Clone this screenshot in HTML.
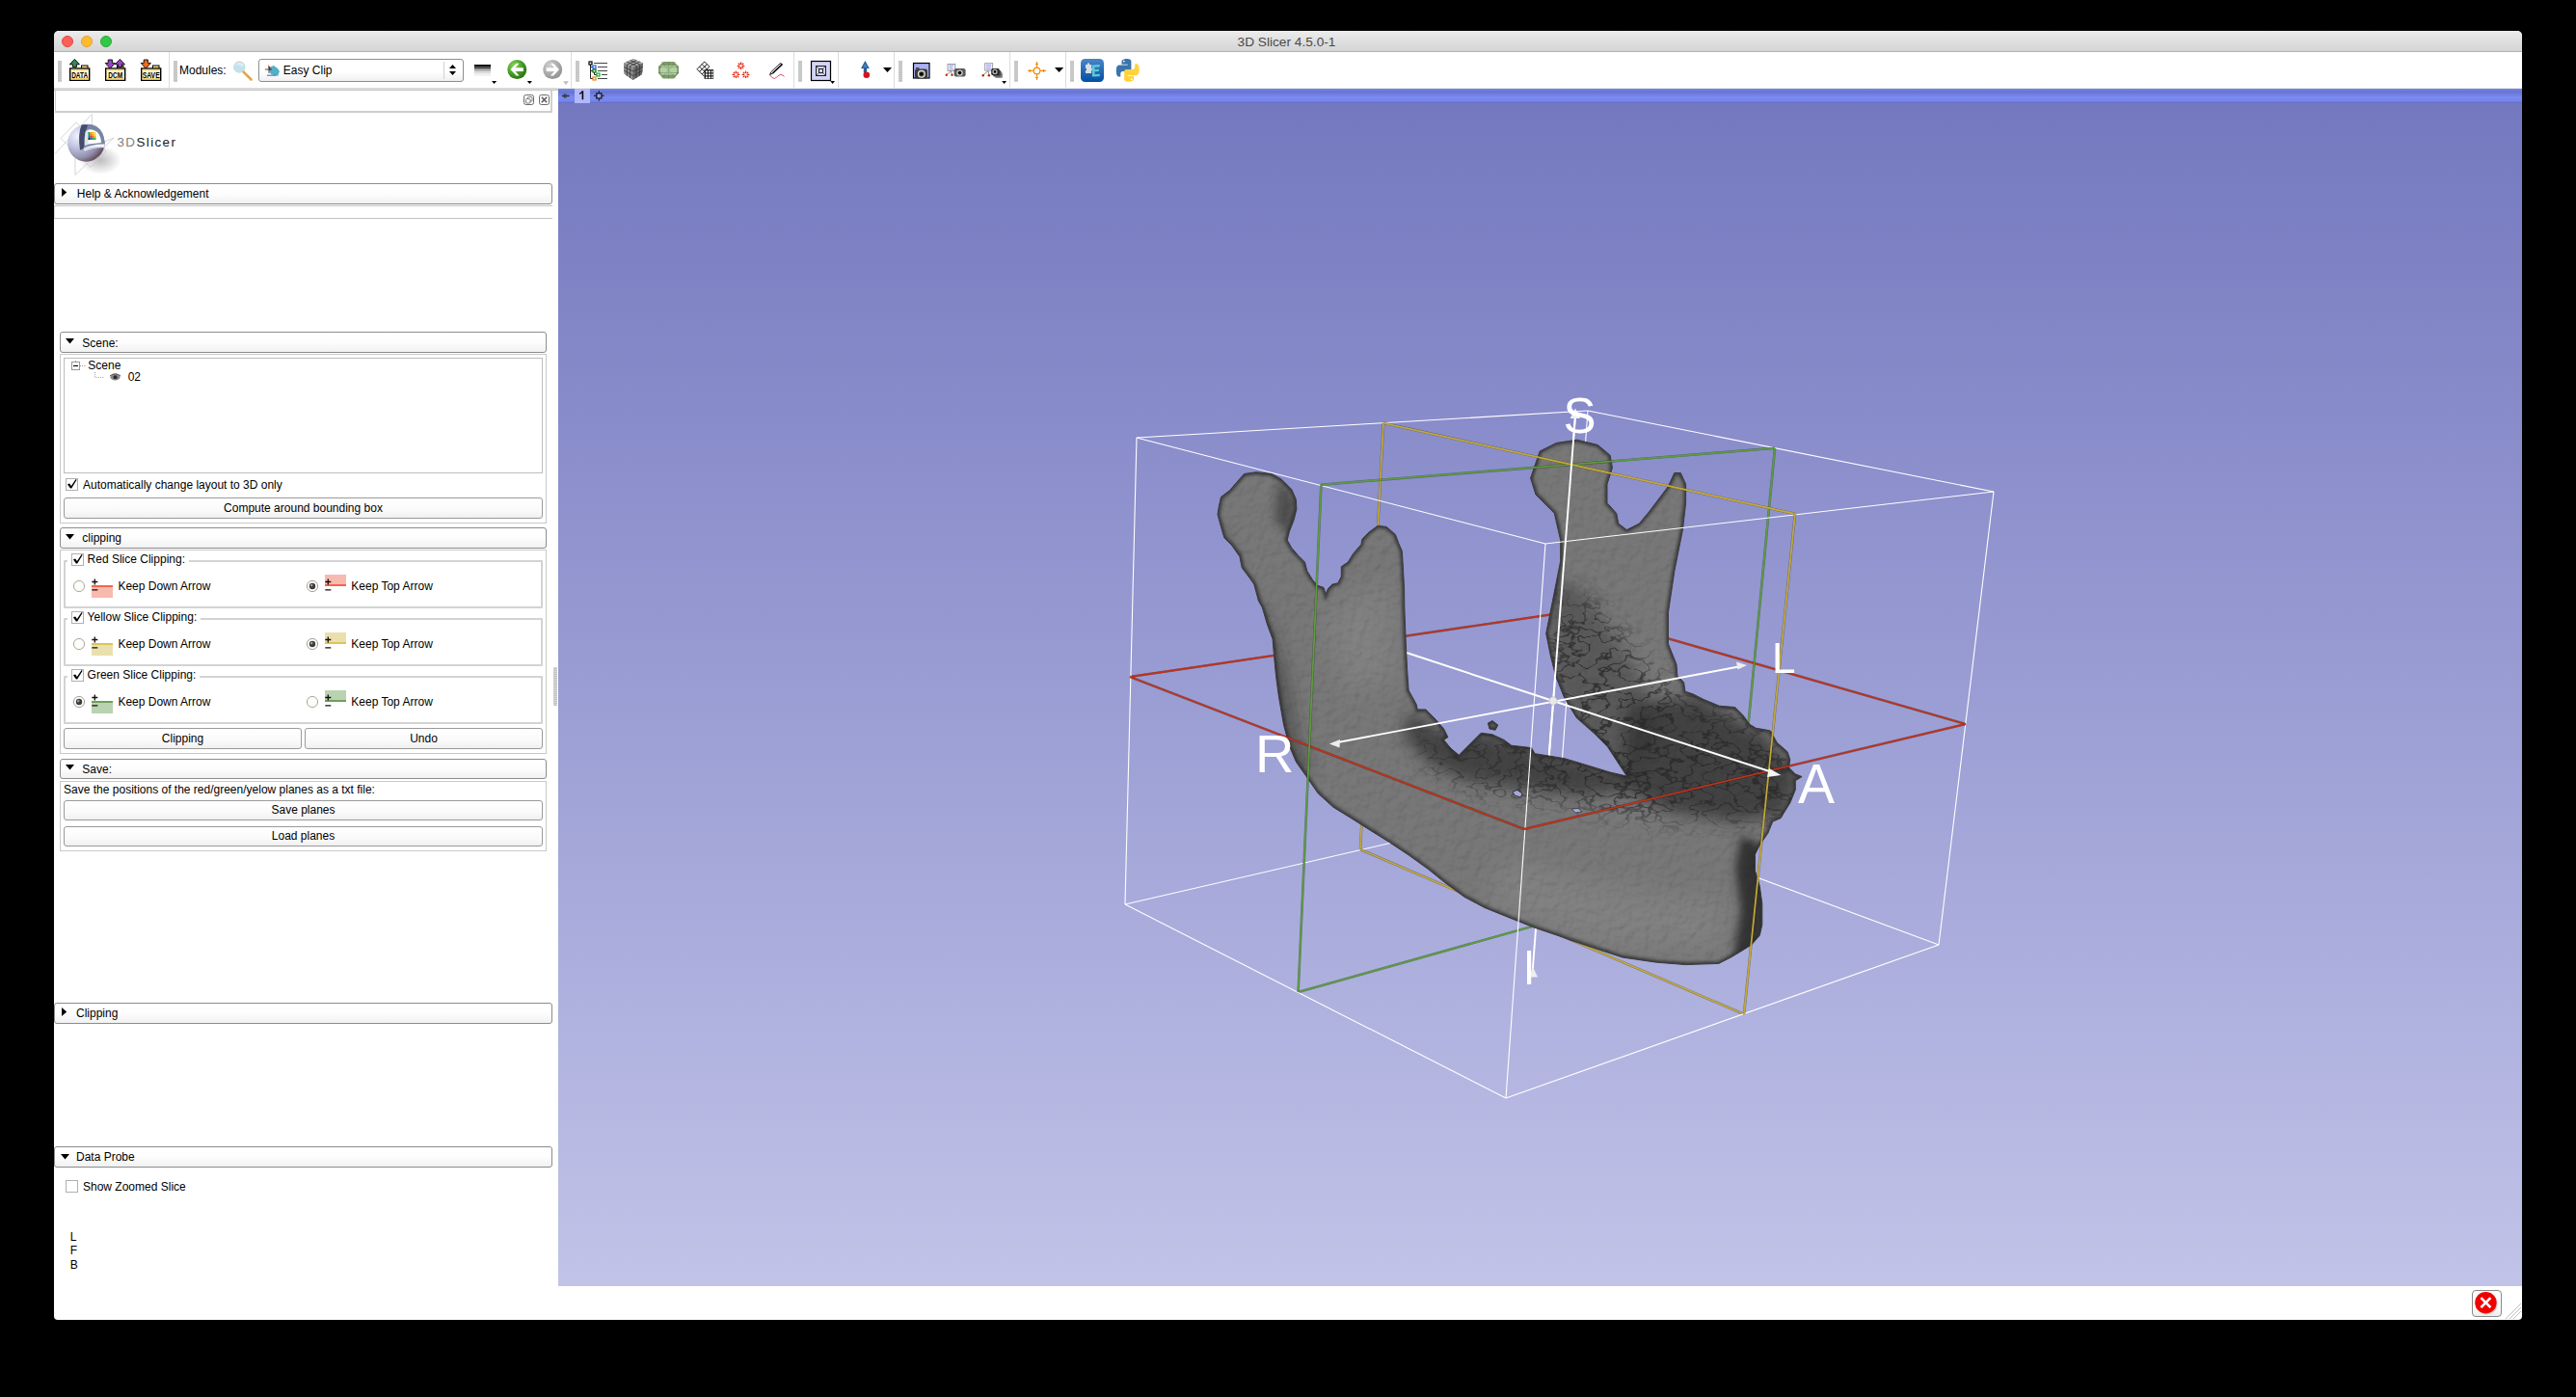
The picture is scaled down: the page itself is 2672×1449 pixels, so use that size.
<!DOCTYPE html>
<html><head><meta charset="utf-8">
<style>
*{box-sizing:border-box;margin:0;padding:0}
html,body{width:2672px;height:1449px;background:#000;overflow:hidden;font-family:"Liberation Sans",sans-serif;color:#000}
.a{position:absolute}
#win{position:absolute;left:56px;top:32px;width:2560px;height:1337px;background:#fff;border-radius:5px 5px 4px 4px;overflow:hidden}
#title{position:absolute;left:0;top:0;width:2560px;height:22px;background:linear-gradient(#ececec,#d4d4d4);border-bottom:1px solid #b2b2b2}
#title .t{position:absolute;left:-1.5px;width:2560px;top:4px;text-align:center;font-size:13.7px;color:#4a4a4a;line-height:16px}
.tl{position:absolute;top:5px;width:12px;height:12px;border-radius:50%}
.txt{position:absolute;white-space:pre;font-size:12px;line-height:14px}
.cb{position:absolute;border:1px solid #8c8c8c;border-radius:3px;background:linear-gradient(#fff 0%,#fdfdfd 50%,#f1f1f1 100%)}
.btn{position:absolute;border:1px solid #9a9a9a;border-radius:3px;background:linear-gradient(#fff 0%,#fafafa 60%,#f0f0f0 100%);font-size:12px;text-align:center;line-height:19px}
.frame{position:absolute;border:1px solid #c9c9c9}
.chk{position:absolute;width:13px;height:13px;border:1px solid #b0b0b0;background:#fff}
</style></head>
<body>
<div id="win">
  <div id="title">
    <div class="tl" style="left:8px;background:#fc5f57;border:1px solid #df4744"></div>
    <div class="tl" style="left:28px;background:#fdbc2e;border:1px solid #dea236"></div>
    <div class="tl" style="left:48px;background:#33c748;border:1px solid #27aa35"></div>
    <div class="t">3D Slicer 4.5.0-1</div>
  </div>
</div>
<div class="a" style="left:56px;top:91px;width:523px;height:3px;background:linear-gradient(#dadada 0,#dadada 66%,#c8c8c8 66%)"></div>
<div class="a" style="left:579px;top:91px;width:2037px;height:1px;background:#ecece6"></div>
<div class="txt" style="left:186px;top:65.9px">Modules:</div>
<div class="a" style="left:268px;top:61px;width:213px;height:24px;border:1px solid #8e8e8e;border-radius:3px;background:linear-gradient(#fff 0%,#fff 55%,#f0f0f0 100%)"></div>
<div class="txt" style="left:293.8px;top:65.9px">Easy Clip</div>
<svg class="a" style="left:0;top:0" width="1200" height="100" viewBox="0 0 1200 100">
<defs>
<pattern id="hdl" width="4" height="2" patternUnits="userSpaceOnUse"><rect width="4" height="2" fill="#cfcfcf"/><rect y="1" width="4" height="1" fill="#c2c2c2"/></pattern>
<radialGradient id="grnb" cx="0.35" cy="0.3" r="0.75"><stop offset="0" stop-color="#8fd45a"/><stop offset="0.6" stop-color="#3f9a22"/><stop offset="1" stop-color="#2a7010"/></radialGradient>
<radialGradient id="gryb" cx="0.35" cy="0.3" r="0.75"><stop offset="0" stop-color="#d0d0d0"/><stop offset="1" stop-color="#8f8f8f"/></radialGradient>
<linearGradient id="extg" x1="0" y1="0" x2="0" y2="1"><stop offset="0" stop-color="#4a86c8"/><stop offset="1" stop-color="#0050a2"/></linearGradient>
<linearGradient id="wlg" x1="0" y1="0" x2="0" y2="1"><stop offset="0" stop-color="#000"/><stop offset="0.2" stop-color="#222"/><stop offset="0.45" stop-color="#888"/><stop offset="0.7" stop-color="#c8c8c8"/><stop offset="1" stop-color="#f4f4f4"/></linearGradient>
<linearGradient id="cubeg" x1="0" y1="0" x2="0" y2="1"><stop offset="0" stop-color="#bdbdbd"/><stop offset="1" stop-color="#4a4a4a"/></linearGradient>
</defs>
<!-- handles -->
<rect x="60" y="63" width="4" height="22" fill="url(#hdl)"/>
<rect x="180" y="63" width="4" height="22" fill="url(#hdl)"/>
<rect x="597" y="63" width="4" height="22" fill="url(#hdl)"/>
<rect x="828" y="63" width="4" height="22" fill="url(#hdl)"/>
<rect x="932" y="63" width="4" height="22" fill="url(#hdl)"/>
<rect x="1052" y="63" width="4" height="22" fill="url(#hdl)"/>
<rect x="1110" y="63" width="4" height="22" fill="url(#hdl)"/>
<!-- separators -->
<g fill="#dcdcdc"><rect x="175" y="54" width="1" height="37"/><rect x="592" y="54" width="1" height="37"/><rect x="869" y="54" width="1" height="37"/><rect x="927" y="54" width="1" height="37"/><rect x="1047" y="54" width="1" height="37"/><rect x="1105" y="54" width="1" height="37"/><rect x="823" y="54" width="1" height="37"/></g>
<!-- DATA -->
<g transform="translate(72,61)">
 <rect x="12.5" y="7" width="6.5" height="4" fill="#f7df8a" stroke="#000" stroke-width="1"/>
 <rect x="0.7" y="10" width="20" height="12.3" fill="#fff8dc" stroke="#000" stroke-width="1.4"/>
 <rect x="1.5" y="20" width="18.5" height="1.6" fill="#f2d36a"/><rect x="1.5" y="10.8" width="18.5" height="1.4" fill="#f2d36a"/>
 <text x="10.7" y="20" font-size="9.5" font-weight="bold" text-anchor="middle" font-family="Liberation Sans" textLength="17" lengthAdjust="spacingAndGlyphs">DATA</text>
 <path d="M0.4 5.8 L5.4 0.4 L10.4 5.8 L7.4 5.8 L7.4 8.6 L3.4 8.6 L3.4 5.8 Z" fill="#2f8a55" stroke="#000" stroke-width="0.9"/>
</g>
<!-- DCM -->
<g transform="translate(109,61)">
 <rect x="12.5" y="7" width="6.5" height="4" fill="#f7df8a" stroke="#000" stroke-width="1"/>
 <rect x="0.7" y="10" width="20" height="12.3" fill="#fff8dc" stroke="#000" stroke-width="1.4"/>
 <rect x="1.5" y="20" width="18.5" height="1.6" fill="#f2d36a"/><rect x="1.5" y="10.8" width="18.5" height="1.4" fill="#f2d36a"/>
 <text x="10.7" y="20" font-size="9.5" font-weight="bold" text-anchor="middle" font-family="Liberation Sans" textLength="15" lengthAdjust="spacingAndGlyphs">DCM</text>
 <path d="M0.2 4.4 L3.2 4.4 L3.2 1 L7.4 1 L7.4 4.4 L10.4 4.4 L5.3 10 Z" fill="#9a45c8" stroke="#000" stroke-width="0.9"/>
 <path d="M10.4 5.8 L15.4 0.4 L20.4 5.8 L17.4 5.8 L17.4 8.6 L13.4 8.6 L13.4 5.8 Z" fill="#9a45c8" stroke="#000" stroke-width="0.9"/>
</g>
<!-- SAVE -->
<g transform="translate(146,61)">
 <rect x="12.5" y="7" width="6.5" height="4" fill="#f7df8a" stroke="#000" stroke-width="1"/>
 <rect x="0.7" y="10" width="20" height="12.3" fill="#fff8dc" stroke="#000" stroke-width="1.4"/>
 <rect x="1.5" y="20" width="18.5" height="1.6" fill="#f2d36a"/><rect x="1.5" y="10.8" width="18.5" height="1.4" fill="#f2d36a"/>
 <text x="10.7" y="20" font-size="9.5" font-weight="bold" text-anchor="middle" font-family="Liberation Sans" textLength="18" lengthAdjust="spacingAndGlyphs">SAVE</text>
 <path d="M0.2 4.4 L3.2 4.4 L3.2 1 L7.4 1 L7.4 4.4 L10.4 4.4 L5.3 10 Z" fill="#f06a1e" stroke="#000" stroke-width="0.9"/>
</g>
<!-- magnifier -->
<g>
 <line x1="252.5" y1="74.5" x2="260.5" y2="82.5" stroke="#e2a640" stroke-width="2.6" stroke-linecap="round"/>
 <circle cx="248.3" cy="69.5" r="5.6" fill="#d6eef5" stroke="#c9c9c9" stroke-width="1"/>
 <path d="M243.5 68.5 Q246 66 248.5 68 Q251 70 253.5 67.5 L253.5 70 Q251 75 248 75 Q244 74.5 243.5 70Z" fill="#bfe3ee"/>
</g>
<!-- combo icon -->
<g transform="translate(275,67)">
 <path d="M4 3 L9 1 L13 4 L15 7 L13 12 L6 10 L4 6Z" fill="#4fb0c8"/>
 <path d="M3 0 L6 4 L4 5 Z" fill="#d02020"/>
 <path d="M0 5 L7 5 M4 2 L4 9" stroke="#222" stroke-width="0.8"/>
 <rect x="2" y="10.5" width="9" height="1.5" fill="#5a6aa0" opacity="0.7"/>
</g>
<!-- combo arrows -->
<path d="M466 70.9 L469.5 66.9 L473 70.9Z M466 74 L469.5 78 L473 74Z" fill="#000"/>
<rect x="460" y="64" width="1" height="18" fill="#d0d0d0"/>
<!-- window level gradient icon -->
<rect x="492" y="67" width="17" height="2.4" fill="#0a0a0a"/><rect x="492" y="69.4" width="17" height="1.8" fill="#3a3a3a"/><rect x="492" y="71.2" width="17" height="1.6" fill="#8a8a8a"/><rect x="492" y="72.8" width="17" height="1.8" fill="#bdbdbd"/><rect x="492" y="74.6" width="17" height="1.9" fill="#dcdcdc"/><rect x="492" y="76.5" width="17" height="2.2" fill="#efefef"/>
<path d="M510 84 L515.2 84 L512.6 87Z" fill="#000"/>
<!-- green back arrow -->
<circle cx="536.3" cy="72.1" r="10" fill="url(#grnb)"/>
<path d="M529.5 72.1 L535.5 65.8 L538.6 65.8 L534.5 70.2 L542.8 70.2 L542.8 74 L534.5 74 L538.6 78.4 L535.5 78.4Z" fill="#fff"/>
<path d="M546.8 84 L552 84 L549.4 87Z" fill="#000"/>
<!-- gray forward arrow -->
<circle cx="573.2" cy="72.1" r="10" fill="url(#gryb)"/>
<path d="M580 72.1 L574 65.8 L570.9 65.8 L575 70.2 L566.7 70.2 L566.7 74 L575 74 L570.9 78.4 L574 78.4Z" fill="#fff"/>
<path d="M584 84.3 L590 84.3 L587 88Z" fill="#bdbdbd"/>
<!-- tree icon -->
<g transform="translate(611,64)" stroke-width="1">
 <path d="M1.5 3 L1.5 17.5 L5 17.5 M1.5 5.5 L5 5.5 M1.5 9.5 L5 9.5 M5.5 11 L5.5 13.5 L9 13.5" stroke="#222" fill="none"/>
 <path d="M5 1.5 L19 1.5 M9 5.5 L19 5.5 M9 9.5 L19 9.5 M13 13.5 L19 13.5 M9 17.5 L19 17.5" stroke="#444" stroke-width="1.2"/>
 <rect x="0" y="0" width="3" height="3" fill="#fff" stroke="#000" stroke-width="1.2"/>
 <rect x="4" y="4" width="3" height="3" fill="#fff" stroke="#1a6cf0" stroke-width="1.2"/>
 <rect x="4" y="8" width="3" height="3" fill="#fff" stroke="#0a6a10" stroke-width="1.2"/>
 <rect x="8" y="12" width="3" height="3" fill="#fff" stroke="#10b020" stroke-width="1.2"/>
 <rect x="4" y="16" width="3" height="3" fill="#fff" stroke="#f08010" stroke-width="1.2"/>
</g>
<!-- cube -->
<g transform="translate(647,61)">
 <path d="M10 0 L20 4.5 L19 16 L9.5 22 L0.5 15.5 L0 4.5Z" fill="#7a7a7a"/>
 <path d="M10 0 L20 4.5 L10 9 L0 4.5Z" fill="#a8a8a8"/>
 <path d="M0 4.5 L10 9 L9.5 22 L0.5 15.5Z" fill="#8e8e8e"/>
 <path d="M10 9 L20 4.5 L19 16 L9.5 22Z" fill="#6a6a6a"/>
 <path d="M3.3 6 L13.3 1.5 M6.7 7.5 L16.7 3 M3.3 3 L13.3 7.5 M6.7 1.5 L16.7 6 M3.3 6 L3.3 17.8 M6.7 7.5 L6.5 20 M0.2 8.5 L10 13 L19.7 8.5 M0.3 12 L9.8 17.5 L19.4 12.3 M13.3 7.5 L13 19.8 M16.7 6 L16.3 17.8" stroke="#333" stroke-width="0.8" fill="none"/>
</g>
<!-- green octagon -->
<g transform="translate(683,64)">
 <path d="M5 0 L16 0 L21 5 L21 12 L16 17.5 L5 17.5 L0 12 L0 5Z" fill="#7c9a6a"/>
 <path d="M3 4 L18 4 L19.5 9 L18 13.5 L3 13.5 L1.5 9Z" fill="#b4cfa4"/>
 <path d="M0 5.5 L21 5.5 M0 11.5 L21 11.5 M10.5 0 L10.5 17.5 M3 0 L18 17.5 M18 0 L3 17.5" stroke="#4a6a3a" stroke-width="0.7" opacity="0.45"/>
</g>
<!-- grid icon -->
<g transform="translate(723,64)">
 <g stroke="#000" stroke-width="0.9" fill="none">
  <path d="M0 7.7 L7.7 0 L13 5.3 M2.6 10.3 L10.3 2.6 M5.2 12.9 L12.9 5.2 M0 7.7 L7.7 15.4 M2.6 5.1 L8 10.5 M5.1 2.6 L10.5 8"/>
 </g>
 <rect x="7.6" y="8.2" width="9.5" height="9.6" fill="#000"/>
 <g fill="#fff"><rect x="8.8" y="9.4" width="2" height="2"/><rect x="11.8" y="9.4" width="2" height="2"/><rect x="14.8" y="9.4" width="1.8" height="2"/><rect x="8.8" y="12.4" width="2" height="2"/><rect x="11.8" y="12.4" width="2" height="2"/><rect x="14.8" y="12.4" width="1.8" height="2"/><rect x="8.8" y="15.4" width="2" height="1.8"/><rect x="11.8" y="15.4" width="2" height="1.8"/><rect x="14.8" y="15.4" width="1.8" height="1.8"/></g>
</g>
<!-- asterisks -->
<g stroke="#e8200a" stroke-width="1.3" stroke-linecap="round">
 <path d="M768.5 65 L768.5 66.5 M768.5 70 L768.5 71.5 M765.2 68.3 L766.7 68.3 M770.3 68.3 L771.8 68.3 M766.2 66 L767 66.8 M770 69.8 L770.8 70.6 M770.8 66 L770 66.8 M767 69.8 L766.2 70.6"/>
 <path d="M763.4 74.1 L763.4 75.6 M763.4 79.1 L763.4 80.6 M760.1 77.4 L761.6 77.4 M765.2 77.4 L766.7 77.4 M761.1 75.1 L761.9 75.9 M764.9 78.9 L765.7 79.7 M765.7 75.1 L764.9 75.9 M761.9 78.9 L761.1 79.7"/>
 <path d="M773.5 74.1 L773.5 75.6 M773.5 79.1 L773.5 80.6 M770.2 77.4 L771.7 77.4 M775.3 77.4 L776.8 77.4 M771.2 75.1 L772 75.9 M775 78.9 L775.8 79.7 M775.8 75.1 L775 75.9 M772 78.9 L771.2 79.7"/>
</g>
<!-- pencil -->
<g>
 <path d="M798.5 77.5 L800 74.5 L809.5 65.5 L811 67 L801.5 76Z" fill="#fff" stroke="#000" stroke-width="0.9"/>
 <path d="M801.5 76 L811 67 L810 66" stroke="#000" stroke-width="1.6" fill="none"/>
 <path d="M798.8 78 Q801 81.5 803.5 81.5 Q806 80 808 78 Q810 77 812 78 L813.5 79.5" stroke="#e03a60" stroke-width="0.9" fill="none"/>
</g>
<!-- layout button -->
<rect x="841.5" y="63.5" width="20" height="20" fill="#d4d4f6" stroke="#000" stroke-width="1.2"/>
<rect x="846.5" y="68.5" width="10" height="10" fill="none" stroke="#222" stroke-width="1"/>
<rect x="849.5" y="71.5" width="4" height="4" fill="none" stroke="#222" stroke-width="1"/>
<path d="M847 69 L849.5 71.5 M856 69 L853.5 71.5 M847 78 L849.5 75.5 M856 78 L853.5 75.5" stroke="#333" stroke-width="0.7"/>
<path d="M861.3 84 L866 84 L863.6 87Z" fill="#000"/>
<!-- blue arrow w red ball -->
<path d="M897.4 63 L901.8 71 L899 71 L899 75.5 L895.8 75.5 L895.8 71 L893 71Z" fill="#245f98"/>
<path d="M897.4 65.5 L900 70 L894.8 70Z" fill="#5a8cc8" opacity="0.7"/>
<circle cx="898.8" cy="77.7" r="3.3" fill="#d8101a"/>
<path d="M916 70 L925 70 L920.5 75Z" fill="#000"/>
<!-- camera 1 -->
<rect x="947.5" y="65.5" width="16.5" height="15.5" fill="#a9b1ef" stroke="#000" stroke-width="1.2"/>
<rect x="950" y="70" width="3.5" height="1.6" fill="#444"/>
<rect x="949" y="71.5" width="13" height="10" rx="2" fill="#3a3a3a"/>
<circle cx="955.8" cy="76.8" r="4" fill="#e8e8e8"/><circle cx="955.8" cy="76.8" r="2.8" fill="#555"/><circle cx="955.8" cy="76.8" r="1.8" fill="#000"/>
<!-- camera 2 -->
<rect x="983" y="66.5" width="7.8" height="7" fill="#f2f2ff" stroke="#8a8a8a" stroke-width="0.8"/>
<path d="M984.5 68 L989 68 M984.5 70 L988 70 M984.5 72 L989 72" stroke="#6060e0" stroke-width="0.6"/>
<path d="M986.5 74 L982 77.5 M986.5 74 L987.5 77.5" stroke="#666" stroke-width="0.7"/>
<circle cx="981.8" cy="77.8" r="1.2" fill="#c03000"/><circle cx="987.5" cy="77.8" r="1.2" fill="#c03000"/>
<rect x="989.6" y="71.1" width="12" height="8.5" rx="2" fill="#5a5a5a"/>
<circle cx="995.5" cy="75.6" r="3.2" fill="#c8c8c8"/><circle cx="995.5" cy="75.6" r="1.8" fill="#000"/>
<!-- camera 3 -->
<rect x="1021.7" y="65.7" width="8" height="7.5" fill="#f2f2ff" stroke="#8a8a8a" stroke-width="0.8"/>
<path d="M1023 67.5 L1028 67.5 M1023 69.5 L1028 69.5 M1023 71.5 L1028 71.5" stroke="#6060e0" stroke-width="0.6"/>
<path d="M1025 73.5 L1020 77.8 M1025 73.5 L1026 77.8" stroke="#666" stroke-width="0.7"/>
<circle cx="1019.8" cy="78.2" r="1.2" fill="#b02000"/><circle cx="1025.8" cy="78.2" r="1.2" fill="#b02000"/>
<rect x="1032" y="75" width="8" height="6" rx="1.5" fill="#909090"/>
<rect x="1030" y="73" width="8.5" height="6.5" rx="1.5" fill="#505050"/>
<rect x="1028.2" y="71" width="8.5" height="7" rx="1.5" fill="#2a2a2a"/>
<circle cx="1032" cy="74.4" r="2.6" fill="#bbb"/><circle cx="1032" cy="74.4" r="1.3" fill="#000"/>
<path d="M1039.2 84 L1044.1 84 L1041.6 87Z" fill="#000"/>
<!-- crosshair -->
<g stroke="#f08c10" stroke-width="1.2" fill="none">
 <path d="M1066 73.4 L1072 73.4 M1079 73.4 L1085 73.4 M1075.5 64 L1075.5 70 M1075.5 77 L1075.5 83"/>
 <circle cx="1075.5" cy="73.4" r="3.3"/>
 <path d="M1068.5 72 L1068.5 75 M1082.5 72 L1082.5 75 M1074 66.5 L1077 66.5 M1074 80.5 L1077 80.5"/>
</g>
<path d="M1094 70.1 L1103.2 70.1 L1098.6 75Z" fill="#000"/>
<!-- extension -->
<rect x="1121" y="61" width="24" height="24" rx="4.5" fill="url(#extg)"/>
<path d="M1126 67 L1128 67 L1128 65.5 L1130 65.5 L1130 67 L1132 67 L1132 71 L1133 71 L1133 73 L1132 73 L1132 76 L1126 76 L1126 73 L1127 73 L1127 71 L1126 71Z" fill="#d8dce4"/>
<path d="M1132.5 67.5 L1141 67 L1140.5 69.5 L1135.5 69.8 L1135.5 72 L1140 71.8 L1139.8 74 L1135.5 74.2 L1135.5 77 L1141 76.8 L1140.5 79.2 L1133 79.5Z" fill="#5cc8d8"/>
<!-- python -->
<path d="M1169.5 61 C1163 61 1163.5 63.8 1163.5 63.8 L1163.5 66.7 L1169.7 66.7 L1169.7 67.6 L1161 67.6 C1161 67.6 1157.8 67.2 1157.8 73.5 C1157.8 79.8 1160.6 79.6 1160.6 79.6 L1162.3 79.6 L1162.3 76.6 C1162.3 76.6 1162.2 73.9 1165 73.9 L1170.8 73.9 C1170.8 73.9 1173.4 73.9 1173.4 71.4 L1173.4 64.1 C1173.4 64.1 1173.8 61 1169.5 61Z" fill="#3a74ac"/>
<circle cx="1165.8" cy="63.6" r="0.9" fill="#fff"/>
<path d="M1170 84.8 C1176.5 84.8 1176 82 1176 82 L1176 79.1 L1169.8 79.1 L1169.8 78.2 L1178.5 78.2 C1178.5 78.2 1181.7 78.6 1181.7 72.3 C1181.7 66 1178.9 66.2 1178.9 66.2 L1177.2 66.2 L1177.2 69.2 C1177.2 69.2 1177.3 71.9 1174.5 71.9 L1168.7 71.9 C1168.7 71.9 1166.1 71.9 1166.1 74.4 L1166.1 81.7 C1166.1 81.7 1165.7 84.8 1170 84.8Z" fill="#ffd23e"/>
<circle cx="1173.7" cy="82.2" r="0.9" fill="#fff"/>
</svg>
<!-- LEFT PANEL -->
<div class="a" style="left:56px;top:94px;width:523px;height:1240px;background:#fff"></div>
<!-- dock title box -->
<div class="a" style="left:57px;top:94px;width:516px;height:23px;border-left:1px solid #d0d0d0;border-right:2px solid #d0d0d0;border-bottom:2px solid #cdcdcd;background:#fff"></div>
<svg class="a" style="left:540px;top:95px" width="34" height="16" viewBox="540 95 34 16">
 <rect x="543.5" y="98.5" width="10" height="10" rx="2" fill="none" stroke="#6b6b6b" stroke-width="1"/>
 <rect x="547.5" y="100.5" width="4.5" height="4.5" rx="0.8" fill="none" stroke="#6b6b6b" stroke-width="0.9"/>
 <rect x="545.5" y="102.5" width="4.5" height="4.5" rx="0.8" fill="#fff" stroke="#6b6b6b" stroke-width="0.9"/>
 <rect x="559.5" y="98.5" width="10" height="10" rx="2" fill="none" stroke="#6b6b6b" stroke-width="1"/>
 <path d="M561.8 100.8 L567.2 106.2 M567.2 100.8 L561.8 106.2" stroke="#5a5a5a" stroke-width="1.6"/>
</svg>
<!-- logo -->
<svg class="a" style="left:56px;top:116px" width="140" height="72" viewBox="56 116 140 72">
 <defs>
  <radialGradient id="sph" cx="0.28" cy="0.3" r="0.85"><stop offset="0" stop-color="#f2f4fc"/><stop offset="0.35" stop-color="#c4c8e4"/><stop offset="0.7" stop-color="#9490b0"/><stop offset="1" stop-color="#4e3034"/></radialGradient>
  <radialGradient id="shd" cx="0.5" cy="0.5" r="0.5"><stop offset="0" stop-color="#000" stop-opacity="0.26"/><stop offset="1" stop-color="#000" stop-opacity="0"/></radialGradient>
 </defs>
 <ellipse cx="104" cy="166" rx="22" ry="15" fill="url(#shd)"/>
 <g stroke="#c4c4c4" stroke-width="0.7" fill="none">
  <path d="M57 159.7 L95.4 118.3 L95.4 145 M63 143.5 L79 127 L110 157 L94 173.5 Z M78 181.5 L78 160 L118 143 Z"/>
 </g>
 <circle cx="89.3" cy="148.5" r="19.2" fill="url(#sph)"/>
 <path d="M84.5 129.8 Q93 127 100 131 Q108 136 108.6 148 L108.5 152 L84 154 Q81 140 84.5 129.8Z" fill="#7886a6"/>
 <path d="M84.5 129.8 Q88 128.5 91 130 Q86.5 140 87 155 L83 155.5 Q80.5 140 84.5 129.8Z" fill="#474a6c"/>
 <path d="M91 135 Q95 133 101 137 Q105 142 105 148 L88 150 Q88 141 91 135Z" fill="#ffffff"/>
 <path d="M88.5 137 Q89.5 134.5 92 134.5 L91.5 150 L88 151 Q87.5 143 88.5 137Z" fill="#dce8e6"/>
 <g>
  <rect x="91.5" y="137" width="2" height="2" fill="#20a040"/><rect x="93.5" y="137" width="2" height="2" fill="#f0a000"/><rect x="95.5" y="137" width="2" height="2" fill="#f0c000"/><rect x="97.5" y="137" width="2" height="2" fill="#f8d860"/>
  <rect x="91.5" y="139" width="2" height="2" fill="#10a040"/><rect x="93.5" y="139" width="2" height="2" fill="#f06010"/><rect x="95.5" y="139" width="2" height="2" fill="#f0b000"/><rect x="97.5" y="139" width="2" height="2" fill="#f8d040"/>
  <rect x="91.5" y="141" width="2" height="2" fill="#1060f0"/><rect x="93.5" y="141" width="2" height="2" fill="#f02010"/><rect x="95.5" y="141" width="2" height="2" fill="#f06020"/><rect x="97.5" y="141" width="2" height="2" fill="#f0b000"/>
  <rect x="91.5" y="143" width="2" height="2" fill="#202020"/><rect x="93.5" y="143" width="2" height="2" fill="#1060e0"/><rect x="95.5" y="143" width="2" height="2" fill="#10a040"/><rect x="97.5" y="143" width="2" height="2" fill="#40b040"/>
 </g>
 <path d="M86 154 Q97 149 108.6 149.5 L108.3 153 Q97 152.5 88 156.5Z" fill="#f4f4fa"/>
 <path d="M85 155 Q96 152 108.3 153 Q107 160 100 164" fill="none" stroke="#a8a8c8" stroke-width="0.6"/>
 <text x="121.5" y="151.8" font-size="13.4" font-family="Liberation Sans" letter-spacing="1.4" fill="#808080">3D<tspan fill="#1a1a1a">Slicer</tspan></text>
</svg>
<!-- Help & Ack -->
<div class="cb" style="left:56px;top:190px;width:517px;height:22px"></div>
<svg class="a" style="left:63px;top:194px" width="8" height="11"><path d="M1 1 L6.2 5.5 L1 10Z" fill="#000"/></svg>
<div class="txt" style="left:79.8px;top:193.7px">Help &amp; Acknowledgement</div>
<div class="a" style="left:56px;top:213px;width:517px;height:14px;border-top:1px solid #c4c4c4;border-bottom:1px solid #c4c4c4;border-left:1px solid #d8d8d8"></div>

<!-- Scene: -->
<div class="cb" style="left:62px;top:344px;width:505px;height:22px"></div>
<svg class="a" style="left:67px;top:350px" width="11" height="8"><path d="M1 1 L10 1 L5.5 6.5Z" fill="#000"/></svg>
<div class="txt" style="left:85.3px;top:348.7px">Scene:</div>
<div class="frame" style="left:62px;top:367px;width:505px;height:176px"></div>
<div class="a" style="left:66px;top:371px;width:497px;height:120px;border:1px solid #bdbdbd;background:#fff"></div>
<svg class="a" style="left:70px;top:372px" width="60" height="26" viewBox="70 372 60 26">
 <rect x="74.5" y="375.5" width="8" height="8" fill="#fff" stroke="#9a9a9a" stroke-width="1"/>
 <path d="M76 379.5 L81 379.5" stroke="#000" stroke-width="1.1"/>
 <path d="M78.5 374 L78.5 375.5 M83 379.5 L89 379.5 M98.5 386 L98.5 391.4 L108 391.4" stroke="#8a8a8a" stroke-width="0.9" stroke-dasharray="1,1.2" fill="none"/>
 <ellipse cx="119.5" cy="391.3" rx="5" ry="3.2" fill="#8a8a8a"/>
 <circle cx="119.5" cy="391.3" r="2" fill="#2a2a2a"/>
 <path d="M114 390 Q119.5 385.5 125 390" stroke="#333" stroke-width="0.9" fill="none"/>
</svg>
<div class="txt" style="left:91.3px;top:371.7px">Scene</div>
<div class="txt" style="left:132.7px;top:384.3px">02</div>
<div class="chk" style="left:68px;top:496px"></div>
<svg class="a" style="left:68px;top:496px" width="13" height="13"><path d="M1.9 6.2 L4.2 5.4 L5.9 8.0 L10.6 1.0 L11.6 1.7 L6.2 10.6 L4.9 10.6Z" fill="#000"/></svg>
<div class="txt" style="left:86px;top:495.8px">Automatically change layout to 3D only</div>
<div class="btn" style="left:66px;top:516px;width:497px;height:22px;line-height:20px">Compute around bounding box</div>

<!-- clipping -->
<div class="cb" style="left:62px;top:547px;width:505px;height:22px"></div>
<svg class="a" style="left:67px;top:553px" width="11" height="8"><path d="M1 1 L10 1 L5.5 6.5Z" fill="#000"/></svg>
<div class="txt" style="left:85.3px;top:551px">clipping</div>
<div class="frame" style="left:62px;top:570px;width:505px;height:212px"></div>
<div class="a" style="left:66px;top:581px;width:497px;height:50px;border:2px solid #d3d3d3;border-radius:1px"></div>
<div class="a" style="left:70px;top:579px;width:126.0px;height:5px;background:#fff"></div>
<div class="chk" style="left:74px;top:574px"></div>
<svg class="a" style="left:74px;top:574px" width="13" height="13"><path d="M1.9 6.2 L4.2 5.4 L5.9 8.0 L10.6 1.0 L11.6 1.7 L6.2 10.6 L4.9 10.6Z" fill="#000"/></svg>
<div class="txt" style="left:90.6px;top:573.0px">Red Slice Clipping:</div>
<svg class="a" style="left:75px;top:601px" width="14" height="14" viewBox="75 601 14 14"><circle cx="82" cy="608" r="5.6" fill="#fdfdfb" stroke="#b0a898" stroke-width="1"/></svg>
<svg class="a" style="left:95px;top:594px" width="24" height="28" viewBox="95 594 24 28"><rect x="95" y="607" width="22" height="13" fill="#f8b9af"/><rect x="95" y="607" width="22" height="2" fill="#f4644e"/><path d="M95.3 603.5 L101.3 603.5 M98.3 600.5 L98.3 606.5 M95.3 611.8 L101.3 611.8" stroke="#1a0c0c" stroke-width="1.3"/></svg>
<div class="txt" style="left:122.4px;top:600.8px">Keep Down Arrow</div>
<svg class="a" style="left:317px;top:601px" width="14" height="14" viewBox="317 601 14 14"><circle cx="324" cy="608" r="5.6" fill="#fff" stroke="#a8a090" stroke-width="1"/><circle cx="324" cy="608" r="3.2" fill="#3c3c3c"/><circle cx="323.2" cy="607.1" r="1.3" fill="#9a9a9a"/></svg>
<svg class="a" style="left:337px;top:594px" width="24" height="28" viewBox="337 594 24 28"><rect x="337" y="596" width="22" height="12" fill="#f8b9af"/><rect x="337" y="606" width="22" height="2" fill="#f4644e"/><path d="M337.3 603.5 L343.3 603.5 M340.3 600.5 L340.3 606.5 M337.3 611.8 L343.3 611.8" stroke="#1a0c0c" stroke-width="1.3"/></svg>
<div class="txt" style="left:364.3px;top:600.8px">Keep Top Arrow</div>
<div class="a" style="left:66px;top:641px;width:497px;height:50px;border:2px solid #d3d3d3;border-radius:1px"></div>
<div class="a" style="left:70px;top:639px;width:138.2px;height:5px;background:#fff"></div>
<div class="chk" style="left:74px;top:634px"></div>
<svg class="a" style="left:74px;top:634px" width="13" height="13"><path d="M1.9 6.2 L4.2 5.4 L5.9 8.0 L10.6 1.0 L11.6 1.7 L6.2 10.6 L4.9 10.6Z" fill="#000"/></svg>
<div class="txt" style="left:90.6px;top:633.0px">Yellow Slice Clipping:</div>
<svg class="a" style="left:75px;top:661px" width="14" height="14" viewBox="75 661 14 14"><circle cx="82" cy="668" r="5.6" fill="#fdfdfb" stroke="#b0a898" stroke-width="1"/></svg>
<svg class="a" style="left:95px;top:654px" width="24" height="28" viewBox="95 654 24 28"><rect x="95" y="667" width="22" height="13" fill="#e9e0ae"/><rect x="95" y="667" width="22" height="2" fill="#dcc45a"/><path d="M95.3 663.5 L101.3 663.5 M98.3 660.5 L98.3 666.5 M95.3 671.8 L101.3 671.8" stroke="#1a0c0c" stroke-width="1.3"/></svg>
<div class="txt" style="left:122.4px;top:660.8px">Keep Down Arrow</div>
<svg class="a" style="left:317px;top:661px" width="14" height="14" viewBox="317 661 14 14"><circle cx="324" cy="668" r="5.6" fill="#fff" stroke="#a8a090" stroke-width="1"/><circle cx="324" cy="668" r="3.2" fill="#3c3c3c"/><circle cx="323.2" cy="667.1" r="1.3" fill="#9a9a9a"/></svg>
<svg class="a" style="left:337px;top:654px" width="24" height="28" viewBox="337 654 24 28"><rect x="337" y="656" width="22" height="12" fill="#e9e0ae"/><rect x="337" y="666" width="22" height="2" fill="#dcc45a"/><path d="M337.3 663.5 L343.3 663.5 M340.3 660.5 L340.3 666.5 M337.3 671.8 L343.3 671.8" stroke="#1a0c0c" stroke-width="1.3"/></svg>
<div class="txt" style="left:364.3px;top:660.8px">Keep Top Arrow</div>
<div class="a" style="left:66px;top:701px;width:497px;height:50px;border:2px solid #d3d3d3;border-radius:1px"></div>
<div class="a" style="left:70px;top:699px;width:137.3px;height:5px;background:#fff"></div>
<div class="chk" style="left:74px;top:694px"></div>
<svg class="a" style="left:74px;top:694px" width="13" height="13"><path d="M1.9 6.2 L4.2 5.4 L5.9 8.0 L10.6 1.0 L11.6 1.7 L6.2 10.6 L4.9 10.6Z" fill="#000"/></svg>
<div class="txt" style="left:90.6px;top:693.0px">Green Slice Clipping:</div>
<svg class="a" style="left:75px;top:721px" width="14" height="14" viewBox="75 721 14 14"><circle cx="82" cy="728" r="5.6" fill="#fff" stroke="#a8a090" stroke-width="1"/><circle cx="82" cy="728" r="3.2" fill="#3c3c3c"/><circle cx="81.2" cy="727.1" r="1.3" fill="#9a9a9a"/></svg>
<svg class="a" style="left:95px;top:714px" width="24" height="28" viewBox="95 714 24 28"><rect x="95" y="727" width="22" height="13" fill="#b9d2b0"/><rect x="95" y="727" width="22" height="2" fill="#6ea05a"/><path d="M95.3 723.5 L101.3 723.5 M98.3 720.5 L98.3 726.5 M95.3 731.8 L101.3 731.8" stroke="#1a0c0c" stroke-width="1.3"/></svg>
<div class="txt" style="left:122.4px;top:720.8px">Keep Down Arrow</div>
<svg class="a" style="left:317px;top:721px" width="14" height="14" viewBox="317 721 14 14"><circle cx="324" cy="728" r="5.6" fill="#fdfdfb" stroke="#b0a898" stroke-width="1"/></svg>
<svg class="a" style="left:337px;top:714px" width="24" height="28" viewBox="337 714 24 28"><rect x="337" y="716" width="22" height="12" fill="#b9d2b0"/><rect x="337" y="726" width="22" height="2" fill="#6ea05a"/><path d="M337.3 723.5 L343.3 723.5 M340.3 720.5 L340.3 726.5 M337.3 731.8 L343.3 731.8" stroke="#1a0c0c" stroke-width="1.3"/></svg>
<div class="txt" style="left:364.3px;top:720.8px">Keep Top Arrow</div>
<div class="btn" style="left:66px;top:755px;width:247px;height:22px;line-height:20px">Clipping</div>
<div class="btn" style="left:316px;top:755px;width:247px;height:22px;line-height:20px">Undo</div>
<!-- Save: -->
<div class="cb" style="left:62px;top:787px;width:505px;height:21px"></div>
<svg class="a" style="left:67px;top:792px" width="11" height="8"><path d="M1 1 L10 1 L5.5 6.5Z" fill="#000"/></svg>
<div class="txt" style="left:85.3px;top:790.8px">Save:</div>
<div class="frame" style="left:62px;top:810px;width:505px;height:73px"></div>
<div class="txt" style="left:66.1px;top:811.5px">Save the positions of the red/green/yelow planes as a txt file:</div>
<div class="btn" style="left:66px;top:830px;width:497px;height:21px;line-height:19px">Save planes</div>
<div class="btn" style="left:66px;top:857px;width:497px;height:21px;line-height:19px">Load planes</div>
<!-- Clipping collapsed -->
<div class="cb" style="left:56px;top:1040px;width:517px;height:22px"></div>
<svg class="a" style="left:63px;top:1044px" width="8" height="11"><path d="M1 1 L6.2 5.5 L1 10Z" fill="#000"/></svg>
<div class="txt" style="left:79px;top:1043.5px">Clipping</div>
<!-- Data Probe -->
<div class="cb" style="left:56px;top:1189px;width:517px;height:22px"></div>
<svg class="a" style="left:62px;top:1196px" width="11" height="8"><path d="M1 1 L10 1 L5.5 6.5Z" fill="#000"/></svg>
<div class="txt" style="left:79px;top:1193.2px">Data Probe</div>
<div class="chk" style="left:68px;top:1224px"></div>
<div class="txt" style="left:86px;top:1224.3px">Show Zoomed Slice</div>
<div class="txt" style="left:72.7px;top:1275.6px;line-height:14.7px">L<br>F<br>B</div>
<!-- splitter handle -->
<div class="a" style="left:574px;top:692px;width:4px;height:40px;background:repeating-linear-gradient(#d6d6d6 0 1px,#c4c4c4 1px 2px)"></div>
<svg class="a" style="left:579px;top:92px" width="2037" height="1242" viewBox="579 92 2037 1242">
<defs>
<linearGradient id="bg3d" x1="0" y1="0" x2="0" y2="1"><stop offset="0" stop-color="#7478bf"/><stop offset="1" stop-color="#c1c3e8"/></linearGradient>
<linearGradient id="hdr" x1="0" y1="0" x2="0" y2="1"><stop offset="0" stop-color="#7283f2"/><stop offset="0.23" stop-color="#6775d0"/><stop offset="0.6" stop-color="#7b8bf2"/><stop offset="0.87" stop-color="#7484ec"/><stop offset="0.97" stop-color="#6670c4"/><stop offset="1" stop-color="#6a70c0"/></linearGradient>
<linearGradient id="boneg" x1="0" y1="0" x2="1" y2="1"><stop offset="0" stop-color="#7c7c7c"/><stop offset="1" stop-color="#777"/></linearGradient>
</defs>
<rect x="579" y="107" width="2037" height="1227" fill="url(#bg3d)"/>
<rect x="579" y="92" width="2037" height="15" fill="url(#hdr)"/>
<rect x="596" y="92" width="16" height="15" fill="#b1b8fc"/>
<path d="M583 99.5 L585 99.5 M585.5 97.5 L585.5 101.5 M586 99.5 L590.5 99.5" stroke="#333" stroke-width="1.3"/><rect x="585.5" y="97.6" width="2.2" height="3.8" rx="1" fill="#444"/>
<path d="M603.6 94.3 L605.2 94.3 L605.2 103.2 L603.6 103.2 L603.6 96.6 Q602.5 97.6 601 97.9 L601 96.6 Q602.8 96 603.6 94.3Z" fill="#0a0a0a"/>
<g stroke="#1d2240" stroke-width="1.1" fill="none"><rect x="618.6" y="96.7" width="5.4" height="5.4" fill="#4a5290"/><rect x="620.3" y="98.4" width="2" height="2" stroke="#d0d8ff" stroke-width="0.8"/><path d="M616 99.4 L618.6 99.4 M624 99.4 L626.6 99.4 M621.3 94 L621.3 96.7 M621.3 102.1 L621.3 104.8"/></g>
<line x1="1179" y1="454" x2="1647" y2="426" stroke="#fff" stroke-width="1.1"/>
<line x1="1647" y1="426" x2="2068" y2="510" stroke="#fff" stroke-width="1.1"/>
<line x1="1647" y1="426" x2="1617" y2="834" stroke="#fff" stroke-width="1.1"/>
<line x1="1167" y1="938" x2="1617" y2="834" stroke="#fff" stroke-width="1.1"/>
<line x1="1617" y1="834" x2="2011" y2="980" stroke="#fff" stroke-width="1.1"/>
<line x1="1172" y1="702" x2="1632" y2="634" stroke="#141414" stroke-width="2.6" stroke-opacity="0.4"/><line x1="1172" y1="702" x2="1632" y2="634" stroke="#c0321a" stroke-width="1.8"/>
<line x1="1632" y1="634" x2="2039" y2="751" stroke="#141414" stroke-width="2.6" stroke-opacity="0.4"/><line x1="1632" y1="634" x2="2039" y2="751" stroke="#c0321a" stroke-width="1.8"/>
<line x1="1841" y1="464.8" x2="1799" y2="902" stroke="#141414" stroke-width="2.6" stroke-opacity="0.4"/><line x1="1841" y1="464.8" x2="1799" y2="902" stroke="#5c9c3c" stroke-width="1.8"/>
<line x1="1799" y1="902" x2="1346.6" y2="1029.1" stroke="#141414" stroke-width="2.6" stroke-opacity="0.4"/><line x1="1799" y1="902" x2="1346.6" y2="1029.1" stroke="#5c9c3c" stroke-width="1.8"/>
<line x1="1435" y1="438.8" x2="1411" y2="881" stroke="#141414" stroke-width="2.6" stroke-opacity="0.4"/><line x1="1435" y1="438.8" x2="1411" y2="881" stroke="#c2a836" stroke-width="1.8"/>
<line x1="1411" y1="881" x2="1809" y2="1052" stroke="#141414" stroke-width="2.6" stroke-opacity="0.4"/><line x1="1411" y1="881" x2="1809" y2="1052" stroke="#c2a836" stroke-width="1.8"/>
<line x1="1611" y1="727" x2="1459" y2="677" stroke="#fff" stroke-width="1.9"/>
<line x1="1634.1" y1="430" x2="1589.7" y2="1007" stroke="#fff" stroke-width="1.9"/>
<line x1="1611" y1="727" x2="1611" y2="727" stroke="#fff" stroke-width="1.9"/>
<clipPath id="bclip"><path d="M1263.0 533.8 L1264.2 525.8 L1266.5 515.5 L1275.6 508.6 L1282.5 500.6 L1290.5 491.5 L1303.1 489.7 L1319.1 491.5 L1329.4 497.2 L1339.7 507.5 L1344.3 517.8 L1344.9 528.1 L1342.0 539.6 L1337.5 551.0 L1335.2 560.2 L1339.7 568.2 L1346.6 576.2 L1353.5 583.1 L1355.8 592.2 L1361.5 601.4 L1366.1 607.1 L1373.0 609.4 L1375.2 616.3 L1377.5 610.6 L1382.1 606.0 L1387.8 604.8 L1391.3 598.0 L1391.3 587.7 L1398.2 583.1 L1403.9 573.9 L1411.9 564.7 L1413.0 559.0 L1419.9 552.1 L1429.1 545.3 L1438.2 546.4 L1447.4 554.4 L1450.8 563.6 L1454.3 571.6 L1455.4 588.8 L1456.6 611.7 L1456.8 630.0 L1458.2 665.8 L1459.6 694.4 L1461.1 715.9 L1469.0 730.2 L1470.4 735.9 L1479.0 735.9 L1489.0 746.0 L1497.6 756.0 L1501.9 764.6 L1497.6 767.4 L1504.7 776.0 L1513.3 783.2 L1521.9 774.6 L1536.2 760.3 L1547.7 761.7 L1560.0 767.4 L1567.8 773.2 L1588.5 775.6 L1592.1 781.7 L1622.5 786.6 L1646.9 793.9 L1670.0 801.0 L1687.4 805.0 L1667.4 774.5 L1653.4 760.5 L1635.2 744.4 L1622.3 723.0 L1613.7 701.5 L1608.3 680.0 L1604.3 660.0 L1603.7 657.0 L1608.0 635.5 L1612.3 614.0 L1618.7 581.8 L1618.7 560.3 L1612.3 532.4 L1593.0 513.0 L1587.6 495.9 L1597.2 468.0 L1614.4 459.4 L1635.9 456.2 L1657.4 461.5 L1670.2 472.3 L1672.4 485.2 L1667.0 502.3 L1667.0 521.7 L1676.7 532.4 L1678.8 543.1 L1687.4 549.6 L1700.3 543.1 L1711.0 530.2 L1730.4 504.5 L1736.8 490.5 L1743.3 490.5 L1748.6 502.3 L1748.6 521.7 L1745.4 549.6 L1736.8 592.5 L1730.4 635.5 L1730.4 667.7 L1739.0 689.2 L1739.8 700.9 L1746.6 707.7 L1748.0 717.2 L1756.2 719.9 L1767.0 725.4 L1783.4 732.2 L1799.7 733.5 L1807.9 741.7 L1814.7 751.2 L1821.5 755.3 L1829.6 756.6 L1836.4 758.0 L1843.2 770.2 L1854.1 779.8 L1856.8 787.9 L1855.5 796.1 L1862.3 802.9 L1869.1 805.6 L1862.3 809.7 L1862.3 819.2 L1856.8 832.8 L1850.0 843.7 L1847.2 848.5 L1838.7 852.2 L1833.8 864.3 L1825.3 876.5 L1820.5 886.2 L1820.5 903.3 L1825.3 919.1 L1827.8 937.3 L1827.8 959.2 L1825.3 970.2 L1816.8 979.9 L1807.1 986.0 L1794.9 993.3 L1782.7 999.4 L1748.7 1000.6 L1718.3 998.2 L1682.7 993.0 L1629.0 975.2 L1620.0 971.8 L1590.5 961.8 L1569.0 953.2 L1540.4 941.7 L1518.9 930.3 L1497.5 914.5 L1481.7 901.7 L1461.7 887.3 L1440.2 873.0 L1417.3 858.7 L1401.6 848.7 L1382.9 837.2 L1367.2 822.9 L1354.3 804.3 L1344.4 790.3 L1337.2 773.2 L1331.5 751.7 L1326.5 723.1 L1323.6 701.6 L1321.5 680.1 L1320.1 662.9 L1314.3 647.2 L1309.3 630.0 L1305.4 623.2 L1300.8 606.0 L1295.1 598.0 L1288.2 588.8 L1285.9 577.3 L1277.9 565.9 L1269.9 557.9 L1266.5 546.4Z M1543.4 750.0 L1548.0 747.6 L1553.8 752.0 L1551.0 757.3 L1545.0 756.0Z"/></clipPath>
<filter id="tex" x="0" y="0" width="100%" height="100%"><feTurbulence type="fractalNoise" baseFrequency="0.11" numOctaves="2" seed="3"/><feColorMatrix type="matrix" values="0 0 0 0 0 0 0 0 0 0 0 0 0 0 0 1 0 0 0 0"/><feDiffuseLighting surfaceScale="3" diffuseConstant="1.1" lighting-color="#fff"><feDistantLight azimuth="235" elevation="50"/></feDiffuseLighting></filter>
<filter id="b2" filterUnits="userSpaceOnUse" x="1150" y="380" width="800" height="700"><feGaussianBlur stdDeviation="1.5"/></filter>
<filter id="b4" filterUnits="userSpaceOnUse" x="1150" y="380" width="800" height="700"><feGaussianBlur stdDeviation="4"/></filter>
<filter id="b8" filterUnits="userSpaceOnUse" x="1150" y="380" width="800" height="700"><feGaussianBlur stdDeviation="8"/></filter>
<filter id="b14" filterUnits="userSpaceOnUse" x="1150" y="380" width="800" height="700"><feGaussianBlur stdDeviation="14"/></filter>
<g clip-path="url(#bclip)">
<rect x="1250" y="450" width="630" height="560" fill="#787878"/>
<g filter="url(#b14)" fill="#8e8e8e" opacity="0.45"><path d="M1560 890 L1700 925 L1790 935 L1785 985 L1650 980 L1540 940Z"/><path d="M1370 640 L1440 600 L1450 700 L1400 720Z"/></g>
<g filter="url(#b8)" fill="#333">
<path d="M1462 738 L1500 762 L1540 760 L1590 774 L1690 804 L1700 818 L1640 826 L1580 818 L1520 810 L1480 790 L1455 762Z" opacity="0.75"/>
<path d="M1690 730 L1760 722 L1830 762 L1866 805 L1850 845 L1800 852 L1730 842 L1680 815Z" opacity="0.8"/>
<path d="M1606 600 L1640 610 L1700 700 L1725 760 L1690 800 L1650 770 L1610 710Z" opacity="0.45"/>
<path d="M1262 540 L1285 600 L1318 650 L1335 700 L1345 760 L1360 800 L1340 805 L1322 740 L1312 680 L1290 620 L1268 580Z" opacity="0.5"/>
</g>
<g filter="url(#b4)" fill="#2e2e2e">
<path d="M1806 868 L1824 874 L1830 920 L1830 965 L1820 985 L1798 992 L1806 945 L1800 900Z" opacity="0.95"/>
<path d="M1326 497 L1346 522 L1340 558 L1322 540Z" opacity="0.55"/>
</g>
<path d="M1263.0 533.8 L1264.2 525.8 L1266.5 515.5 L1275.6 508.6 L1282.5 500.6 L1290.5 491.5 L1303.1 489.7 L1319.1 491.5 L1329.4 497.2 L1339.7 507.5 L1344.3 517.8 L1344.9 528.1 L1342.0 539.6 L1337.5 551.0 L1335.2 560.2 L1339.7 568.2 L1346.6 576.2 L1353.5 583.1 L1355.8 592.2 L1361.5 601.4 L1366.1 607.1 L1373.0 609.4 L1375.2 616.3 L1377.5 610.6 L1382.1 606.0 L1387.8 604.8 L1391.3 598.0 L1391.3 587.7 L1398.2 583.1 L1403.9 573.9 L1411.9 564.7 L1413.0 559.0 L1419.9 552.1 L1429.1 545.3 L1438.2 546.4 L1447.4 554.4 L1450.8 563.6 L1454.3 571.6 L1455.4 588.8 L1456.6 611.7 L1456.8 630.0 L1458.2 665.8 L1459.6 694.4 L1461.1 715.9 L1469.0 730.2 L1470.4 735.9 L1479.0 735.9 L1489.0 746.0 L1497.6 756.0 L1501.9 764.6 L1497.6 767.4 L1504.7 776.0 L1513.3 783.2 L1521.9 774.6 L1536.2 760.3 L1547.7 761.7 L1560.0 767.4 L1567.8 773.2 L1588.5 775.6 L1592.1 781.7 L1622.5 786.6 L1646.9 793.9 L1670.0 801.0 L1687.4 805.0 L1667.4 774.5 L1653.4 760.5 L1635.2 744.4 L1622.3 723.0 L1613.7 701.5 L1608.3 680.0 L1604.3 660.0 L1603.7 657.0 L1608.0 635.5 L1612.3 614.0 L1618.7 581.8 L1618.7 560.3 L1612.3 532.4 L1593.0 513.0 L1587.6 495.9 L1597.2 468.0 L1614.4 459.4 L1635.9 456.2 L1657.4 461.5 L1670.2 472.3 L1672.4 485.2 L1667.0 502.3 L1667.0 521.7 L1676.7 532.4 L1678.8 543.1 L1687.4 549.6 L1700.3 543.1 L1711.0 530.2 L1730.4 504.5 L1736.8 490.5 L1743.3 490.5 L1748.6 502.3 L1748.6 521.7 L1745.4 549.6 L1736.8 592.5 L1730.4 635.5 L1730.4 667.7 L1739.0 689.2 L1739.8 700.9 L1746.6 707.7 L1748.0 717.2 L1756.2 719.9 L1767.0 725.4 L1783.4 732.2 L1799.7 733.5 L1807.9 741.7 L1814.7 751.2 L1821.5 755.3 L1829.6 756.6 L1836.4 758.0 L1843.2 770.2 L1854.1 779.8 L1856.8 787.9 L1855.5 796.1 L1862.3 802.9 L1869.1 805.6 L1862.3 809.7 L1862.3 819.2 L1856.8 832.8 L1850.0 843.7 L1847.2 848.5 L1838.7 852.2 L1833.8 864.3 L1825.3 876.5 L1820.5 886.2 L1820.5 903.3 L1825.3 919.1 L1827.8 937.3 L1827.8 959.2 L1825.3 970.2 L1816.8 979.9 L1807.1 986.0 L1794.9 993.3 L1782.7 999.4 L1748.7 1000.6 L1718.3 998.2 L1682.7 993.0 L1629.0 975.2 L1620.0 971.8 L1590.5 961.8 L1569.0 953.2 L1540.4 941.7 L1518.9 930.3 L1497.5 914.5 L1481.7 901.7 L1461.7 887.3 L1440.2 873.0 L1417.3 858.7 L1401.6 848.7 L1382.9 837.2 L1367.2 822.9 L1354.3 804.3 L1344.4 790.3 L1337.2 773.2 L1331.5 751.7 L1326.5 723.1 L1323.6 701.6 L1321.5 680.1 L1320.1 662.9 L1314.3 647.2 L1309.3 630.0 L1305.4 623.2 L1300.8 606.0 L1295.1 598.0 L1288.2 588.8 L1285.9 577.3 L1277.9 565.9 L1269.9 557.9 L1266.5 546.4Z M1543.4 750.0 L1548.0 747.6 L1553.8 752.0 L1551.0 757.3 L1545.0 756.0Z" fill="none" stroke="#2a2a2a" stroke-width="5" filter="url(#b2)" opacity="0.75"/>
<rect x="1250" y="450" width="630" height="560" filter="url(#tex)" opacity="0.22" style="mix-blend-mode:multiply"/>
<filter id="crev" filterUnits="userSpaceOnUse" x="1250" y="450" width="630" height="560" color-interpolation-filters="sRGB"><feTurbulence type="fractalNoise" baseFrequency="0.045 0.075" numOctaves="3" seed="11" result="t"/><feColorMatrix in="t" type="matrix" values="0 0 0 1 0  0 0 0 1 0  0 0 0 1 0  0 0 0 0 1"/><feComponentTransfer><feFuncR type="table" tableValues="0 0 0 0 0 0 0 0 0 0 1 0 0 0 0 0 0 0 0 0 0"/></feComponentTransfer><feColorMatrix type="matrix" values="0 0 0 0 0.15  0 0 0 0 0.15  0 0 0 0 0.15  1 0 0 0 0"/></filter>
<mask id="crevm" maskUnits="userSpaceOnUse" x="1250" y="450" width="630" height="560"><g filter="url(#b14)" fill="#fff"><path d="M1600 640 L1650 620 L1720 700 L1760 730 L1850 770 L1866 810 L1850 850 L1700 850 L1520 810 L1480 760 L1600 770 L1610 700Z"/></g><g filter="url(#b8)" fill="#aaa"><path d="M1470 772 L1540 770 L1600 785 L1605 835 L1540 825 L1480 800Z"/></g></mask>
<rect x="1250" y="450" width="630" height="560" filter="url(#crev)" mask="url(#crevm)" opacity="0.85"/>
</g>
<path d="M1263.0 533.8 L1264.2 525.8 L1266.5 515.5 L1275.6 508.6 L1282.5 500.6 L1290.5 491.5 L1303.1 489.7 L1319.1 491.5 L1329.4 497.2 L1339.7 507.5 L1344.3 517.8 L1344.9 528.1 L1342.0 539.6 L1337.5 551.0 L1335.2 560.2 L1339.7 568.2 L1346.6 576.2 L1353.5 583.1 L1355.8 592.2 L1361.5 601.4 L1366.1 607.1 L1373.0 609.4 L1375.2 616.3 L1377.5 610.6 L1382.1 606.0 L1387.8 604.8 L1391.3 598.0 L1391.3 587.7 L1398.2 583.1 L1403.9 573.9 L1411.9 564.7 L1413.0 559.0 L1419.9 552.1 L1429.1 545.3 L1438.2 546.4 L1447.4 554.4 L1450.8 563.6 L1454.3 571.6 L1455.4 588.8 L1456.6 611.7 L1456.8 630.0 L1458.2 665.8 L1459.6 694.4 L1461.1 715.9 L1469.0 730.2 L1470.4 735.9 L1479.0 735.9 L1489.0 746.0 L1497.6 756.0 L1501.9 764.6 L1497.6 767.4 L1504.7 776.0 L1513.3 783.2 L1521.9 774.6 L1536.2 760.3 L1547.7 761.7 L1560.0 767.4 L1567.8 773.2 L1588.5 775.6 L1592.1 781.7 L1622.5 786.6 L1646.9 793.9 L1670.0 801.0 L1687.4 805.0 L1667.4 774.5 L1653.4 760.5 L1635.2 744.4 L1622.3 723.0 L1613.7 701.5 L1608.3 680.0 L1604.3 660.0 L1603.7 657.0 L1608.0 635.5 L1612.3 614.0 L1618.7 581.8 L1618.7 560.3 L1612.3 532.4 L1593.0 513.0 L1587.6 495.9 L1597.2 468.0 L1614.4 459.4 L1635.9 456.2 L1657.4 461.5 L1670.2 472.3 L1672.4 485.2 L1667.0 502.3 L1667.0 521.7 L1676.7 532.4 L1678.8 543.1 L1687.4 549.6 L1700.3 543.1 L1711.0 530.2 L1730.4 504.5 L1736.8 490.5 L1743.3 490.5 L1748.6 502.3 L1748.6 521.7 L1745.4 549.6 L1736.8 592.5 L1730.4 635.5 L1730.4 667.7 L1739.0 689.2 L1739.8 700.9 L1746.6 707.7 L1748.0 717.2 L1756.2 719.9 L1767.0 725.4 L1783.4 732.2 L1799.7 733.5 L1807.9 741.7 L1814.7 751.2 L1821.5 755.3 L1829.6 756.6 L1836.4 758.0 L1843.2 770.2 L1854.1 779.8 L1856.8 787.9 L1855.5 796.1 L1862.3 802.9 L1869.1 805.6 L1862.3 809.7 L1862.3 819.2 L1856.8 832.8 L1850.0 843.7 L1847.2 848.5 L1838.7 852.2 L1833.8 864.3 L1825.3 876.5 L1820.5 886.2 L1820.5 903.3 L1825.3 919.1 L1827.8 937.3 L1827.8 959.2 L1825.3 970.2 L1816.8 979.9 L1807.1 986.0 L1794.9 993.3 L1782.7 999.4 L1748.7 1000.6 L1718.3 998.2 L1682.7 993.0 L1629.0 975.2 L1620.0 971.8 L1590.5 961.8 L1569.0 953.2 L1540.4 941.7 L1518.9 930.3 L1497.5 914.5 L1481.7 901.7 L1461.7 887.3 L1440.2 873.0 L1417.3 858.7 L1401.6 848.7 L1382.9 837.2 L1367.2 822.9 L1354.3 804.3 L1344.4 790.3 L1337.2 773.2 L1331.5 751.7 L1326.5 723.1 L1323.6 701.6 L1321.5 680.1 L1320.1 662.9 L1314.3 647.2 L1309.3 630.0 L1305.4 623.2 L1300.8 606.0 L1295.1 598.0 L1288.2 588.8 L1285.9 577.3 L1277.9 565.9 L1269.9 557.9 L1266.5 546.4Z M1543.4 750.0 L1548.0 747.6 L1553.8 752.0 L1551.0 757.3 L1545.0 756.0Z" fill="none" stroke="#3a3a3a" stroke-width="1"/>
<path d="M1569 821 L1574 819.5 L1579 823 L1577.5 827 L1571 825Z" fill="#a3a6da" stroke="#222" stroke-width="0.8"/><path d="M1630.5 839 L1637 838.5 L1641 842 L1634 843Z" fill="#a6a9dc" stroke="#222" stroke-width="0.6"/>
<line x1="1179" y1="454" x2="1603" y2="564" stroke="#fff" stroke-width="1.1"/>
<line x1="1603" y1="564" x2="2068" y2="510" stroke="#fff" stroke-width="1.1"/>
<line x1="1603" y1="564" x2="1562" y2="1139" stroke="#fff" stroke-width="1.1"/>
<line x1="1179" y1="454" x2="1167" y2="938" stroke="#fff" stroke-width="1.1"/>
<line x1="2068" y1="510" x2="2011" y2="980" stroke="#fff" stroke-width="1.1"/>
<line x1="1167" y1="938" x2="1562" y2="1139" stroke="#fff" stroke-width="1.1"/>
<line x1="1562" y1="1139" x2="2011" y2="980" stroke="#fff" stroke-width="1.1"/>
<line x1="1172" y1="702" x2="1581" y2="860" stroke="#141414" stroke-width="2.6" stroke-opacity="0.4"/><line x1="1172" y1="702" x2="1581" y2="860" stroke="#c0321a" stroke-width="1.8"/>
<line x1="1581" y1="860" x2="2039" y2="751" stroke="#141414" stroke-width="2.6" stroke-opacity="0.4"/><line x1="1581" y1="860" x2="2039" y2="751" stroke="#c0321a" stroke-width="1.8"/>
<line x1="1370.4" y1="502.7" x2="1841" y2="464.8" stroke="#141414" stroke-width="2.6" stroke-opacity="0.4"/><line x1="1370.4" y1="502.7" x2="1841" y2="464.8" stroke="#5c9c3c" stroke-width="1.8"/>
<line x1="1370.4" y1="502.7" x2="1346.6" y2="1029.1" stroke="#141414" stroke-width="2.6" stroke-opacity="0.4"/><line x1="1370.4" y1="502.7" x2="1346.6" y2="1029.1" stroke="#5c9c3c" stroke-width="1.8"/>
<line x1="1435" y1="438.8" x2="1862" y2="533" stroke="#141414" stroke-width="2.6" stroke-opacity="0.4"/><line x1="1435" y1="438.8" x2="1862" y2="533" stroke="#c2a836" stroke-width="1.8"/>
<line x1="1862" y1="533" x2="1809" y2="1052" stroke="#141414" stroke-width="2.6" stroke-opacity="0.4"/><line x1="1862" y1="533" x2="1809" y2="1052" stroke="#c2a836" stroke-width="1.8"/>
<line x1="1634.1" y1="430" x2="1606.9" y2="781" stroke="#fff" stroke-width="1.9"/>
<line x1="1385" y1="770.5" x2="1806" y2="691" stroke="#fff" stroke-width="1.9"/>
<line x1="1611" y1="727" x2="1840" y2="801.5" stroke="#fff" stroke-width="1.9"/>
<path d="M1378.8 771.5 L1390 767 L1389.5 775.5Z" fill="#eee"/>
<path d="M1812 690 L1801 686.5 L1802.5 694.5Z" fill="#eee"/>
<path d="M1847.4 804.1 L1835 797 L1833 806Z" fill="#f4f4f4"/>
<path d="M1634.1 423.5 L1628.6 434 L1639 434Z" fill="#f0f0f0"/>
<path d="M1590 1003 L1586 1013.5 L1595 1013.5Z" fill="#eee"/>
<circle cx="1611" cy="727" r="4.3" fill="#e8e8e8" stroke="#aaa" stroke-width="0.5"/>
<g font-family="Liberation Sans" fill="#fff">
<text x="1621.5" y="448.8" font-size="51">S</text>
<text x="1302" y="801.1" font-size="56">R</text>
<text x="1865" y="833.2" font-size="57">A</text>
<text x="1838" y="698" font-size="44">L</text>
<rect x="1584" y="986" width="4.2" height="35"/>
</g>
</svg>
<!-- status bar -->
<svg class="a" style="left:2560px;top:1334px" width="56" height="35" viewBox="2560 1334 56 35">
 <defs><linearGradient id="xbg" x1="0" y1="0" x2="0" y2="1"><stop offset="0" stop-color="#fff"/><stop offset="0.7" stop-color="#fafafa"/><stop offset="1" stop-color="#ececec"/></linearGradient></defs>
 <rect x="2564.5" y="1338.5" width="30" height="27" rx="3.5" fill="url(#xbg)" stroke="#8a8a8a" stroke-width="1"/>
 <circle cx="2579.4" cy="1352.2" r="11.3" fill="#8a8a8a" opacity="0.35"/>
 <circle cx="2578.4" cy="1351.2" r="11.2" fill="#f20000"/>
 <path d="M2573.4 1346.2 L2583.4 1356.2 M2583.4 1346.2 L2573.4 1356.2" stroke="#fff" stroke-width="2.6"/>
 <path d="M2615 1352 L2599 1368 M2615 1356 L2603 1368 M2615 1360 L2607 1368" stroke="#b8b8b8" stroke-width="0.9"/>
</svg>
</body></html>
